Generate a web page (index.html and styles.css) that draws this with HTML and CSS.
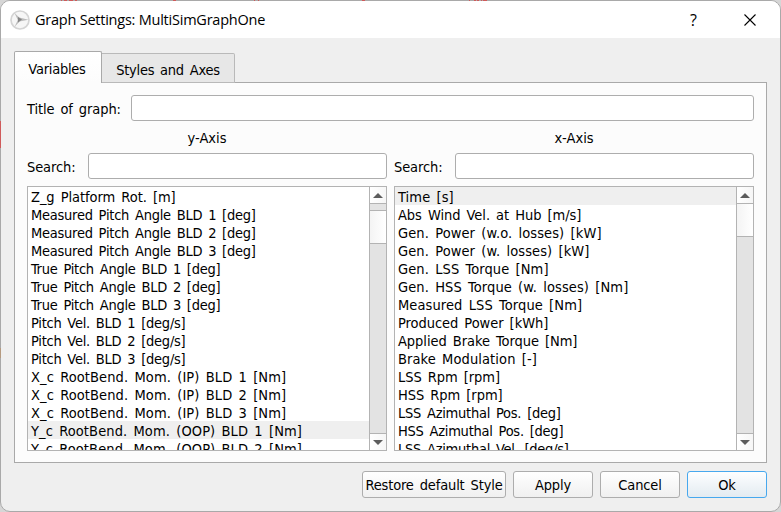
FILE: index.html
```html
<!DOCTYPE html>
<html lang="en">
<head>
<meta charset="utf-8">
<title>Graph Settings</title>
<link rel="stylesheet" href="styles.css">
</head>
<body>
<div class="window">
  <header class="titlebar">
    <svg class="logo" width="20" height="20" viewBox="0 0 20 20"><circle cx="10" cy="10" r="9" fill="#f6f6f6" stroke="#d4d4d4" stroke-width="1.7"/><path d="M4.5 3 L9.3 7.6 L18.5 9.7 L9.5 11.4 L4.5 17 L7.8 10Z" fill="#bcbcbc"/><path d="M8 7 L12 9.6 L8 12.4Z" fill="#858585"/></svg>
    <span class="title">Graph Settings: MultiSimGraphOne</span>
    <span class="help">?</span>
    <svg class="close" width="12" height="12" viewBox="0 0 12 12"><path d="M.5 .5 L11.5 11.5 M11.5 .5 L.5 11.5" stroke="#000" stroke-width="1.1"/></svg>
  </header>
  <nav class="tabs"><div class="tab active"><span>Variables</span></div><div class="tab"><span>Styles and Axes</span></div></nav>
  <main class="pane">
    <div class="field title-row"><label>Title of graph:</label><input type="text"></div>
    <div class="columns">
      <section class="column">
        <h2>y-Axis</h2>
        <div class="field"><label>Search:</label><input type="text"></div>
        <div class="list">
          <ul>
            <li class="roomy">Z_g Platform Rot. [m]</li>
            <li>Measured Pitch Angle BLD 1 [deg]</li>
            <li>Measured Pitch Angle BLD 2 [deg]</li>
            <li>Measured Pitch Angle BLD 3 [deg]</li>
            <li>True Pitch Angle BLD 1 [deg]</li>
            <li>True Pitch Angle BLD 2 [deg]</li>
            <li>True Pitch Angle BLD 3 [deg]</li>
            <li>Pitch Vel. BLD 1 [deg/s]</li>
            <li>Pitch Vel. BLD 2 [deg/s]</li>
            <li>Pitch Vel. BLD 3 [deg/s]</li>
            <li class="loose">X_c RootBend. Mom. (IP) BLD 1 [Nm]</li>
            <li class="loose">X_c RootBend. Mom. (IP) BLD 2 [Nm]</li>
            <li class="loose">X_c RootBend. Mom. (IP) BLD 3 [Nm]</li>
            <li class="loose current">Y_c RootBend. Mom. (OOP) BLD 1 [Nm]</li>
            <li class="loose">Y_c RootBend. Mom. (OOP) BLD 2 [Nm]</li>
          </ul>
          <div class="scrollbar scrolled"><div class="step up"><svg width="10" height="5"><path d="M0 5 L5 0 L10 5Z"/></svg></div><div class="thumb"></div><div class="step down"><svg width="10" height="5"><path d="M0 0 L5 5 L10 0Z"/></svg></div></div>
        </div>
      </section>
      <section class="column">
        <h2>x-Axis</h2>
        <div class="field"><label>Search:</label><input type="text"></div>
        <div class="list">
          <ul>
            <li class="loose current">Time [s]</li>
            <li class="roomy">Abs Wind Vel. at Hub [m/s]</li>
            <li class="loose">Gen. Power (w.o. losses) [kW]</li>
            <li class="loose">Gen. Power (w. losses) [kW]</li>
            <li class="loose">Gen. LSS Torque [Nm]</li>
            <li class="loose">Gen. HSS Torque (w. losses) [Nm]</li>
            <li class="loose">Measured LSS Torque [Nm]</li>
            <li class="roomy">Produced Power [kWh]</li>
            <li class="roomy">Applied Brake Torque [Nm]</li>
            <li class="loose">Brake Modulation [-]</li>
            <li class="roomy">LSS Rpm [rpm]</li>
            <li class="roomy">HSS Rpm [rpm]</li>
            <li>LSS Azimuthal Pos. [deg]</li>
            <li>HSS Azimuthal Pos. [deg]</li>
            <li>LSS Azimuthal Vel. [deg/s]</li>
          </ul>
          <div class="scrollbar"><div class="step up"><svg width="10" height="5"><path d="M0 5 L5 0 L10 5Z"/></svg></div><div class="thumb"></div><div class="step down"><svg width="10" height="5"><path d="M0 0 L5 5 L10 0Z"/></svg></div></div>
        </div>
      </section>
    </div>
  </main>
  <footer class="actions">
    <button class="wide">Restore default Style</button><button>Apply</button><button>Cancel</button><button class="primary">Ok</button>
  </footer>
</div>
<svg class="edge" width="781" height="512"><path d="M61 .5h1 M64 .5h3 M69 .5h4 M75 .5h2 M173 .5h3 M254 .5h1 M258 .5h1 M362 .5h3 M469 .5h1 M474 .5h2 M477 .5h2 M481 .5h1 M483 .5h4 M.5 121v27" stroke="#cf5a5a"/><path d="M.5 348v10" stroke="#b59a80"/></svg>
</body>
</html>
```
FILE: styles.css
```css
* { box-sizing: border-box; }
body {
  position: relative;
  margin: 0;
  width: 781px;
  height: 512px;
  overflow: hidden;
  background: #d6d6d6;
  font: 14.5px/18px "DejaVu Sans Condensed", "DejaVu Sans", sans-serif;
  font-stretch: condensed;
  letter-spacing: -0.25px;
  word-spacing: 2px;
  color: #000;
}
.edge { position: absolute; left: 0; top: 0; }
.window {
  height: 512px;
  border: 1px solid #a9a9a9;
  border-radius: 10px;
  background: #efefef;
  overflow: hidden;
}
.titlebar {
  display: flex;
  align-items: center;
  height: 37px;
  padding: 0 24px 0 9px;
  background: #fff;
  letter-spacing: 0;
  word-spacing: 0;
}
.title { margin-left: 5px; font-family: "Open Sans", sans-serif; font-size: 14.5px; font-stretch: normal; letter-spacing: -0.23px; }
.help { margin-left: auto; font: 16px/18px "Open Sans", sans-serif; }
.close { margin-left: 47px; }
.tabs { display: flex; align-items: flex-end; position: relative; height: 45px; margin: 0 0 -1px 13px; }
.tab {
  width: 133px;
  height: 30px;
  padding-top: 7px;
  border: 1px solid #b9b9b9;
  border-left: 0;
  border-radius: 0 2px 0 0;
  background: #e7e7e7;
  text-align: center;
}
.tab.active {
  width: 88px;
  height: 32px;
  padding: 8px 2px 0 0;
  border: 1px solid #a9a9a9;
  border-bottom: 0;
  border-radius: 2px 2px 0 0;
  background: linear-gradient(#fff, #fcfcfc);
}
.pane {
  width: 753px;
  height: 381px;
  margin: 0 0 0 13px;
  padding: 12px;
  border: 1px solid #a9a9a9;
  background: #fcfcfc;
}
.field { display: flex; align-items: center; height: 26px; }
.field label { flex: 0 0 61px; padding-top: 1px; white-space: nowrap; letter-spacing: -0.1px; }
.title-row label { flex-basis: 104px; }
.field input {
  flex: 1;
  min-width: 0;
  height: 26px;
  padding: 0;
  border: 1px solid #adadad;
  border-radius: 3px;
  background: #fff;
}
.columns { display: grid; grid-template-columns: 360px 360px; gap: 7px; }
h2 { height: 32px; margin: 0; padding-top: 8px; font: inherit; letter-spacing: 0; text-align: center; }
.list { display: flex; height: 265px; margin-top: 7px; border: 1px solid #b3b3b3; background: #fff; }
.list ul { flex: 1; height: 263px; margin: 0; padding: 0; overflow: hidden; list-style: none; }
.list li { height: 18px; padding: 1px 0 0 3px; white-space: nowrap; }
.list li.roomy { letter-spacing: -0.05px; }
.list li.loose { letter-spacing: 0.1px; }
.list li.current { background: #efefef; }
.scrollbar {
  display: flex;
  flex-direction: column;
  width: 17px;
  border-left: 1px solid #b3b3b3;
  background: #e3e3e3;
}
.step { display: grid; place-items: center; height: 17px; background: linear-gradient(90deg, #fff, #f6f6f6); fill: #5c5c5c; }
.up { border-bottom: 1px solid #b3b3b3; }
.down { margin-top: auto; border-top: 1px solid #b3b3b3; }
.thumb { height: 33px; border-bottom: 1px solid #b3b3b3; background: linear-gradient(90deg, #f4f4f4, #fff); }
.scrolled .thumb { height: 34px; margin-top: 6px; border-top: 1px solid #b3b3b3; }
.actions { display: flex; justify-content: flex-end; gap: 7px; margin: 8px 13px 0; }
button {
  width: 80px;
  height: 27px;
  padding: 1px 0 0;
  border: 1px solid #adadad;
  border-radius: 3px;
  background: linear-gradient(#fff, #f0f0f0);
  font: inherit;
  letter-spacing: -0.15px;
  word-spacing: inherit;
  white-space: nowrap;
}
.wide { width: 144px; }
.primary { border-color: #47a8ee; background: linear-gradient(#fdfeff, #e3ebf1); }
```
